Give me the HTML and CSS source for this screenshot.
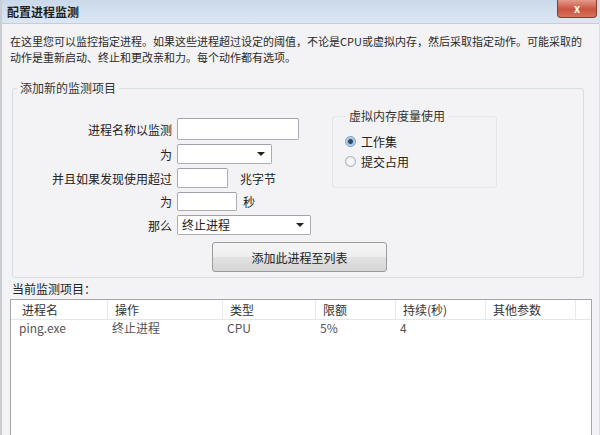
FILE: index.html
```html
<!DOCTYPE html>
<html lang="zh-CN">
<head>
  <meta charset="UTF-8" />
  <title>配置进程监测</title>
  <link rel="stylesheet" href="styles.css">
</head>
<body>
  <div class="window">
    <div class="titlebar">
      <span class="title">配置进程监测</span>
      <span class="close">x</span>
    </div>

    <div class="content">
      <p class="desc">在这里您可以监控指定进程。如果这些进程超过设定的阈值，不论是CPU或虚拟内存，然后采取指定动作。可能采取的<br>动作是重新启动、终止和更改亲和力。每个动作都有选项。</p>

      <fieldset class="group">
        <legend>添加新的监测项目</legend>
        <div class="group-inner">
          <div class="form">
            <div class="row r1"><label>进程名称以监测</label><span class="input w-name"></span></div>
            <div class="row"><label>为</label><span class="select w-for"><span class="arrow"></span></span></div>
            <div class="row"><label>并且如果发现使用超过</label><span class="input w-mb"></span><span class="unit u-mb">兆字节</span></div>
            <div class="row r4"><label>为</label><span class="input w-sec"></span><span class="unit">秒</span></div>
            <div class="row"><label>那么</label><span class="select w-then">终止进程<span class="arrow"></span></span></div>
          </div>
          <fieldset class="radios">
            <legend>虚拟内存度量使用</legend>
            <div class="radio"><span class="dot on"></span>工作集</div>
            <div class="radio"><span class="dot"></span>提交占用</div>
          </fieldset>
        </div>
        <div class="actions"><button class="add">添加此进程至列表</button></div>
      </fieldset>

      <div class="list-title">当前监测项目：</div>
      <div class="list">
        <div class="list-head">
          <span class="c1">进程名</span><span>操作</span><span>类型</span><span>限额</span><span>持续(秒)</span><span>其他参数</span><span class="last"></span>
        </div>
        <div class="list-row">
          <span class="c1">ping.exe</span><span>终止进程</span><span>CPU</span><span>5%</span><span>4</span><span></span><span></span>
        </div>
      </div>
    </div>
  </div>
</body>
</html>
```

FILE: styles.css
```css
* { box-sizing: border-box; }
body { margin: 0; font-family: "Noto Sans CJK SC", "Liberation Sans", sans-serif; font-size: 12px; color: #222; background: #f3f3f5; }

.window { height: 435px; overflow: hidden; display: flex; flex-direction: column; border-left: 2px solid #c9cdd3; border-right: 1px solid #dcdfe3; }

.titlebar { height: 24px; flex-shrink: 0; display: flex; justify-content: space-between; align-items: flex-start; padding-left: 5px; background: linear-gradient(to bottom, #cad9ea, #dce7f3); border-bottom: 1px solid #c3cedb; }
.title { font-weight: bold; line-height: 24px; color: #1e1e1e; }
.close { width: 40px; height: 18px; margin-right: 2px; border: 1px solid #8a3b30; border-top: none; border-radius: 0 0 4px 4px; background: linear-gradient(to bottom, #e49a8a, #c9543f 55%, #d7735d); color: #fff; font-weight: bold; font-size: 11px; line-height: 16px; text-align: center; }

.content { flex: 1; display: flex; flex-direction: column; padding: 0 7px 0 8px; }

.desc { margin: 9px 0 0 0; font-size: 11px; line-height: 16px; white-space: nowrap; color: #2a2a2a; }

.group { margin: 16px 8px 0 2px; padding: 14px 0 5px 0; border: 1px solid #d6dde3; border-radius: 3px; }
.group > legend { margin-left: 4px; padding: 0 3px; line-height: 14px; color: #333; }
.group-inner { display: flex; align-items: flex-start; }

.form { width: 319px; flex-shrink: 0; margin-top: 9px; display: flex; flex-direction: column; gap: 4px; }
.row { display: flex; align-items: center; height: 20px; }
.row.r1 { height: 22px; }
.row.r4 { height: 19px; }
.row label { width: 159px; margin-right: 5px; text-align: right; color: #222; }

.input, .select { display: block; height: 100%; background: #fff; border: 1px solid #abadb3; border-top-color: #9ea3aa; border-radius: 2px; }
.select { position: relative; padding-left: 4px; line-height: 18px; }
.arrow { position: absolute; right: 6px; top: 7px; border: 4px solid transparent; border-top: 4px solid #222; border-bottom: none; }
.w-name { width: 122px; }
.w-for { width: 95px; }
.w-mb { width: 51px; }
.w-sec { width: 60px; }
.w-then { width: 134px; }
.unit { margin-left: 6px; }
.u-mb { margin-left: 12px; }

.radios { width: 165px; margin: 0; padding: 8px 0 16px 12px; border: 1px solid #e2e6ea; border-radius: 3px; }
.radios legend { margin-left: 1px; padding: 0 3px; line-height: 14px; color: #333; }
.radio { display: flex; align-items: center; height: 20px; color: #222; }
.dot { width: 11px; height: 11px; margin-right: 5px; border-radius: 50%; border: 1px solid #a5acb5; background: radial-gradient(circle, #fff, #dfe4ea); }
.dot.on { border-color: #7a9cbf; background: radial-gradient(circle, #334a5e 0 2px, #9bc4e4 3px, #e8f1f8); }

.actions { padding-left: 199px; margin-top: 7px; }
.add { width: 175px; height: 30px; font: inherit; color: #222; border: 1px solid #9a9b9c; border-radius: 3px; background: linear-gradient(to bottom, #f6f6f6, #eeeeee 50%, #e2e2e2 51%, #d6d6d6); }

.list-title { margin-top: 4px; line-height: 14px; padding-left: 2px; color: #222; }
.list { flex: 1; margin-top: 3px; background: #fff; border: 1px solid #a3a7ad; border-bottom: none; }
.list-head, .list-row { display: grid; grid-template-columns: 97px 115px 93px 80px 90px 90px 1fr; }
.list-head { height: 20px; line-height: 19px; border-bottom: 1px solid #e3e7ec; color: #333; }
.list-head span { padding-left: 7px; border-right: 1px solid #e8eaed; }
.list-head span.last { border-right: none; }
.list-row { height: 16px; line-height: 16px; color: #555; }
.list-row span { padding-left: 4px; }
.list-head .c1 { padding-left: 11px; }
.list-row .c1 { padding-left: 8px; }
```
